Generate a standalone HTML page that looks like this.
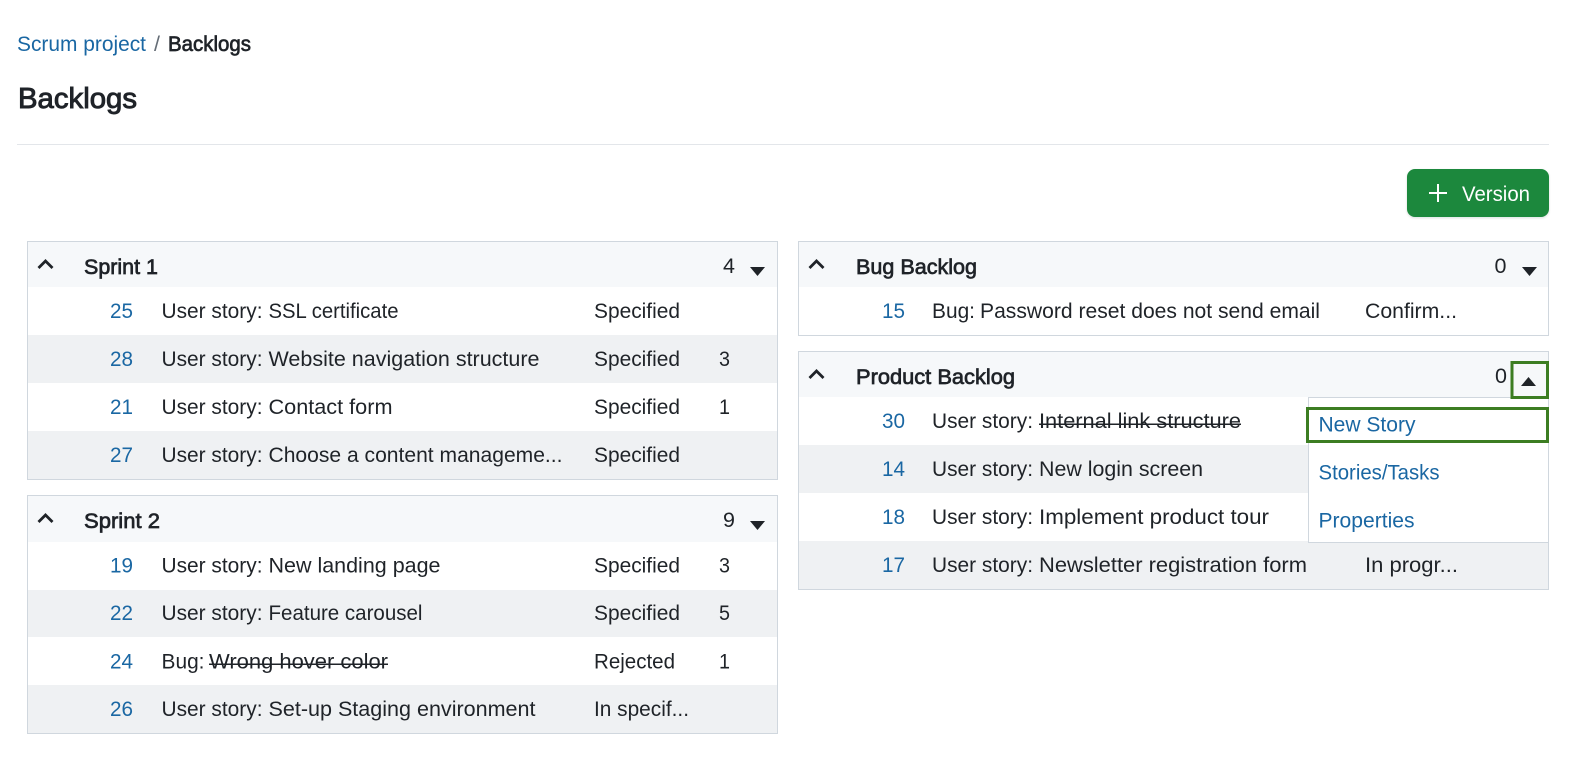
<!DOCTYPE html>
<html><head><meta charset="utf-8"><title>Backlogs</title>
<style>
html,body{margin:0;padding:0;background:#fff;width:1572px;height:763px;overflow:hidden}
svg{display:block;font-family:"Liberation Sans",sans-serif;font-size:21.5px;fill:#1f2328}
.l{fill:#1a67a3}
.b{stroke:#1f2328;stroke-width:.7px}
</style></head><body>
<svg width="1572" height="763" viewBox="0 0 1572 763" xmlns="http://www.w3.org/2000/svg">
<defs><filter id="s" x="-5%" y="-10%" width="110%" height="130%"><feDropShadow dx="0" dy="1" stdDeviation="1" flood-color="#1f2328" flood-opacity=".15"/></filter></defs>
<text x="17" y="51" class="l" textLength="129" lengthAdjust="spacingAndGlyphs">Scrum project</text>
<text x="154" y="51" style="fill:#656d76">/</text>
<text x="168" y="51" class="b" textLength="83" lengthAdjust="spacingAndGlyphs">Backlogs</text>
<text x="18" y="108" class="b" style="font-size:29px;stroke-width:.95px" textLength="119" lengthAdjust="spacingAndGlyphs">Backlogs</text>
<rect x="17" y="144" width="1532" height="1" fill="#e3e6ea"/>

<rect x="1407" y="169" width="142" height="48" rx="8" fill="#1f883d" filter="url(#s)"/>
<path d="M1429 193H1447M1438 184V202" stroke="#fff" stroke-width="2" fill="none"/>
<text x="1462" y="201" style="fill:#fff" textLength="68" lengthAdjust="spacingAndGlyphs">Version</text>

<!-- Sprint 1 -->
<rect x="27.500" y="241.500" width="750" height="238" fill="#fff" stroke="#d0d7de"/>
<rect x="28" y="242" width="749" height="45" fill="#f6f8fa"/>
<rect x="28" y="335" width="749" height="48" fill="#eff1f3"/>
<rect x="28" y="431" width="749" height="48" fill="#eff1f3"/>
<rect x="27.500" y="241.500" width="750" height="238" fill="none" stroke="#d0d7de"/>
<path d="M38.500 268L45.500 261L52.500 268" fill="none" stroke="#1f2328" stroke-width="2.800"/>
<text x="84" y="274" class="b" textLength="74" lengthAdjust="spacingAndGlyphs">Sprint 1</text>
<text x="723" y="273">4</text>
<path d="M750 267H765L757.500 276Z"/>
<text x="110" y="318" class="l" textLength="23" lengthAdjust="spacingAndGlyphs">25</text>
<text x="161.500" y="318" textLength="101" lengthAdjust="spacingAndGlyphs">User story:</text>
<text x="268.500" y="318" textLength="130" lengthAdjust="spacingAndGlyphs">SSL certificate</text>
<text x="594" y="318" textLength="86" lengthAdjust="spacingAndGlyphs">Specified</text>
<text x="110" y="366" class="l" textLength="23" lengthAdjust="spacingAndGlyphs">28</text>
<text x="161.500" y="366" textLength="101" lengthAdjust="spacingAndGlyphs">User story:</text>
<text x="268.500" y="366" textLength="271" lengthAdjust="spacingAndGlyphs">Website navigation structure</text>
<text x="594" y="366" textLength="86" lengthAdjust="spacingAndGlyphs">Specified</text>
<text x="719" y="366" textLength="11" lengthAdjust="spacingAndGlyphs">3</text>
<text x="110" y="414" class="l" textLength="23" lengthAdjust="spacingAndGlyphs">21</text>
<text x="161.500" y="414" textLength="101" lengthAdjust="spacingAndGlyphs">User story:</text>
<text x="268.500" y="414" textLength="124" lengthAdjust="spacingAndGlyphs">Contact form</text>
<text x="594" y="414" textLength="86" lengthAdjust="spacingAndGlyphs">Specified</text>
<text x="719" y="414" textLength="11" lengthAdjust="spacingAndGlyphs">1</text>
<text x="110" y="462" class="l" textLength="23" lengthAdjust="spacingAndGlyphs">27</text>
<text x="161.500" y="462" textLength="101" lengthAdjust="spacingAndGlyphs">User story:</text>
<text x="268.500" y="462" textLength="294" lengthAdjust="spacingAndGlyphs">Choose a content manageme...</text>
<text x="594" y="462" textLength="86" lengthAdjust="spacingAndGlyphs">Specified</text>

<!-- Sprint 2 -->
<rect x="27.500" y="495.500" width="750" height="238" fill="#fff" stroke="#d0d7de"/>
<rect x="28" y="496" width="749" height="46" fill="#f6f8fa"/>
<rect x="28" y="590" width="749" height="47" fill="#eff1f3"/>
<rect x="28" y="685" width="749" height="48" fill="#eff1f3"/>
<rect x="27.500" y="495.500" width="750" height="238" fill="none" stroke="#d0d7de"/>
<path d="M38.500 522L45.500 515L52.500 522" fill="none" stroke="#1f2328" stroke-width="2.800"/>
<text x="84" y="528" class="b" textLength="76" lengthAdjust="spacingAndGlyphs">Sprint 2</text>
<text x="723" y="527">9</text>
<path d="M750 521H765L757.500 530Z"/>
<text x="110" y="572.500" class="l" textLength="23" lengthAdjust="spacingAndGlyphs">19</text>
<text x="161.500" y="572.500" textLength="101" lengthAdjust="spacingAndGlyphs">User story:</text>
<text x="268.500" y="572.500" textLength="172" lengthAdjust="spacingAndGlyphs">New landing page</text>
<text x="594" y="572.500" textLength="86" lengthAdjust="spacingAndGlyphs">Specified</text>
<text x="719" y="572.500" textLength="11" lengthAdjust="spacingAndGlyphs">3</text>
<text x="110" y="620" class="l" textLength="23" lengthAdjust="spacingAndGlyphs">22</text>
<text x="161.500" y="620" textLength="101" lengthAdjust="spacingAndGlyphs">User story:</text>
<text x="268.500" y="620" textLength="154" lengthAdjust="spacingAndGlyphs">Feature carousel</text>
<text x="594" y="620" textLength="86" lengthAdjust="spacingAndGlyphs">Specified</text>
<text x="719" y="620" textLength="11" lengthAdjust="spacingAndGlyphs">5</text>
<text x="110" y="668.500" class="l" textLength="23" lengthAdjust="spacingAndGlyphs">24</text>
<text x="161.500" y="668.500" textLength="43" lengthAdjust="spacingAndGlyphs">Bug:</text>
<text x="209" y="668.500" textLength="179" lengthAdjust="spacingAndGlyphs">Wrong hover color</text>
<rect x="209" y="663.500" width="179" height="1.500"/>
<text x="594" y="668.500" textLength="81" lengthAdjust="spacingAndGlyphs">Rejected</text>
<text x="719" y="668.500" textLength="11" lengthAdjust="spacingAndGlyphs">1</text>
<text x="110" y="716" class="l" textLength="23" lengthAdjust="spacingAndGlyphs">26</text>
<text x="161.500" y="716" textLength="101" lengthAdjust="spacingAndGlyphs">User story:</text>
<text x="268.500" y="716" textLength="267" lengthAdjust="spacingAndGlyphs">Set-up Staging environment</text>
<text x="594" y="716" textLength="95" lengthAdjust="spacingAndGlyphs">In specif...</text>

<!-- Bug Backlog -->
<rect x="798.500" y="241.500" width="750" height="94" fill="#fff" stroke="#d0d7de"/>
<rect x="799" y="242" width="749" height="45" fill="#f6f8fa"/>
<rect x="798.500" y="241.500" width="750" height="94" fill="none" stroke="#d0d7de"/>
<path d="M809.500 268L816.500 261L823.500 268" fill="none" stroke="#1f2328" stroke-width="2.800"/>
<text x="856" y="274" class="b" textLength="121" lengthAdjust="spacingAndGlyphs">Bug Backlog</text>
<text x="1494.500" y="273">0</text>
<path d="M1522 267H1537L1529.500 276Z"/>
<text x="882" y="318" class="l" textLength="23" lengthAdjust="spacingAndGlyphs">15</text>
<text x="932" y="318" textLength="43" lengthAdjust="spacingAndGlyphs">Bug:</text>
<text x="980" y="318" textLength="340" lengthAdjust="spacingAndGlyphs">Password reset does not send email</text>
<text x="1365" y="318" textLength="92" lengthAdjust="spacingAndGlyphs">Confirm...</text>

<!-- Product Backlog -->
<rect x="798.500" y="351.500" width="750" height="238" fill="#fff" stroke="#d0d7de"/>
<rect x="799" y="352" width="749" height="45" fill="#f6f8fa"/>
<rect x="799" y="445" width="749" height="48" fill="#eff1f3"/>
<rect x="799" y="541" width="749" height="48" fill="#eff1f3"/>
<rect x="798.500" y="351.500" width="750" height="238" fill="none" stroke="#d0d7de"/>
<path d="M809.500 378L816.500 371L823.500 378" fill="none" stroke="#1f2328" stroke-width="2.800"/>
<text x="856" y="384" class="b" textLength="159" lengthAdjust="spacingAndGlyphs">Product Backlog</text>
<text x="1495" y="383">0</text>
<text x="882" y="428" class="l" textLength="23" lengthAdjust="spacingAndGlyphs">30</text>
<text x="932" y="428" textLength="101" lengthAdjust="spacingAndGlyphs">User story:</text>
<text x="1039" y="428" textLength="202" lengthAdjust="spacingAndGlyphs">Internal link structure</text>
<rect x="1039" y="423.500" width="202" height="1.500"/>
<text x="882" y="476" class="l" textLength="23" lengthAdjust="spacingAndGlyphs">14</text>
<text x="932" y="476" textLength="101" lengthAdjust="spacingAndGlyphs">User story:</text>
<text x="1039" y="476" textLength="164" lengthAdjust="spacingAndGlyphs">New login screen</text>
<text x="882" y="524" class="l" textLength="23" lengthAdjust="spacingAndGlyphs">18</text>
<text x="932" y="524" textLength="101" lengthAdjust="spacingAndGlyphs">User story:</text>
<text x="1039" y="524" textLength="230" lengthAdjust="spacingAndGlyphs">Implement product tour</text>
<text x="882" y="572" class="l" textLength="23" lengthAdjust="spacingAndGlyphs">17</text>
<text x="932" y="572" textLength="101" lengthAdjust="spacingAndGlyphs">User story:</text>
<text x="1039" y="572" textLength="268" lengthAdjust="spacingAndGlyphs">Newsletter registration form</text>
<text x="1365" y="572" textLength="93" lengthAdjust="spacingAndGlyphs">In progr...</text>

<!-- Dropdown -->
<rect x="1308.500" y="397.500" width="240" height="145" fill="#fff" stroke="#d0d7de"/>
<text x="1318.500" y="431.500" class="l" textLength="97" lengthAdjust="spacingAndGlyphs">New Story</text>
<text x="1318.500" y="479.500" class="l" textLength="121" lengthAdjust="spacingAndGlyphs">Stories/Tasks</text>
<text x="1318.500" y="527.500" class="l" textLength="96" lengthAdjust="spacingAndGlyphs">Properties</text>
<rect x="1307.500" y="408.500" width="240" height="33" fill="none" stroke="#3c7d22" stroke-width="3"/>
<rect x="1512" y="362.500" width="35.500" height="35" fill="none" stroke="#3c7d22" stroke-width="3"/>
<path d="M1521 386H1536L1528.500 377Z"/>
</svg>
</body></html>
